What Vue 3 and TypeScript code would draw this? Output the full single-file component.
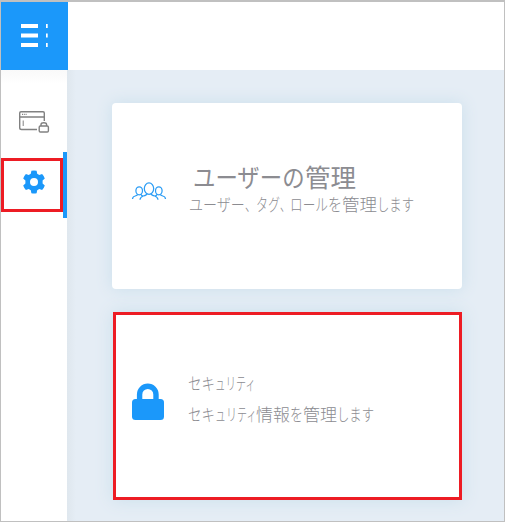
<script setup lang="ts">
interface Run {
  text: string
  width: number
}
interface Card {
  id: string
  titleSize: number
  title: Run[]
  description: Run[]
  selected: boolean
}

const BODY_SIZE = 17

const cards: Card[] = [
  {
    id: 'users',
    titleSize: 25,
    title: [
      { text: 'ユーザーの', width: 112 },
      { text: '管理', width: 51 },
    ],
    description: [
      { text: 'ユーザー', width: 56 },
      { text: '、', width: 11 },
      { text: 'タグ', width: 24 },
      { text: '、', width: 10 },
      { text: 'ロール', width: 38 },
      { text: 'を', width: 14 },
      { text: '管理', width: 35 },
      { text: 'します', width: 37 },
    ],
    selected: false,
  },
  {
    id: 'security',
    titleSize: BODY_SIZE,
    title: [
      { text: 'セキ', width: 27 },
      { text: 'ュリ', width: 21 },
      { text: 'ティ', width: 20 },
    ],
    description: [
      { text: 'セキ', width: 27 },
      { text: 'ュリ', width: 22 },
      { text: 'ティ', width: 20 },
      { text: '情報', width: 34 },
      { text: 'を', width: 13 },
      { text: '管理', width: 34 },
      { text: 'します', width: 37 },
    ],
    selected: true,
  },
]

// Condenses a run of full-width glyphs to its proportional advance.
function condense(run: Run, size: number) {
  const natural = run.text.length * size
  return {
    transform: `scaleX(${run.width / natural})`,
    marginRight: `${run.width - natural}px`,
  }
}
</script>

<template>
  <div class="page">
    <header class="topbar">
      <button class="menu" aria-label="メニュー">
        <svg width="67" height="68" viewBox="0 0 67 68">
          <path d="M20 22h17v4H20zM20 31.5h17v4H20zM20 41h17v4H20z" fill="#fff" />
          <path d="M45 22h1.7v4H45zM45 31.5h1.7v4H45zM45 41h1.7v4H45z" fill="#fff" />
        </svg>
      </button>
    </header>
    <div class="body">
      <nav class="sidebar">
        <a class="nav-item">
          <svg width="32" height="24" viewBox="0 0 32 24" fill="none" stroke="#818181" stroke-width="1.4">
            <path d="M19 19.5H3.5Q1.7 19.5 1.7 17.7V3Q1.7 1.7 3 1.7H25Q26.3 1.7 26.3 3V11M2 7H26" />
            <path d="M4 4.4H9" stroke-dasharray="1.2 1" />
            <path d="M5.2 10.5V16" stroke-width="1" />
            <rect x="21.2" y="16" width="9.2" height="6" rx="1.2" />
            <path d="M23 16V14.5Q23.2 12.7 25.8 12.7T28.6 14.5V16" />
          </svg>
        </a>
        <a class="nav-item active">
          <svg width="24" height="24" viewBox="0 0 24 24">
            <path
              fill="#1b98fa"
              fill-rule="evenodd"
              d="M9.4.8Q12 .2 14.6.8L15.2 3.7L17.3 4.9L20.1 4Q22 6 22.8 8.5L20.6 10.5V13.5L22.8 15.5Q22 18 20.1 20L17.3 19.1L15.2 20.3L14.6 23.2Q12 23.8 9.4 23.2L8.8 20.3L6.7 19.1L3.9 20Q2 18 1.2 15.5L3.4 13.5V10.5L1.2 8.5Q2 6 3.9 4L6.7 4.9L8.8 3.7ZM12 8a4 4 0 1 0 0 8a4 4 0 1 0 0-8Z"
            />
          </svg>
        </a>
      </nav>
      <main class="content">
        <section v-for="card in cards" :key="card.id" class="card" :class="[card.id, { selected: card.selected }]">
          <div class="icon">
            <svg v-if="card.id === 'users'" width="36" height="20" viewBox="0 0 36 20" fill="none" stroke="#2c9df5" stroke-width="1.25">
              <ellipse cx="18" cy="6.6" rx="4.7" ry="5.7" />
              <path d="M9 17.8Q9.3 15 12.2 14Q15.8 13.2 16 11.6M20 11.6Q20.2 13.2 23.8 14Q26.7 15 27 17.8" />
              <ellipse cx="8.2" cy="8.8" rx="3.3" ry="4" />
              <ellipse cx="27.8" cy="8.8" rx="3.3" ry="4" />
              <path d="M1.5 17Q1.7 14.6 4.2 14Q6.5 13.3 6.7 12.3M9.8 12.3Q10.2 13.4 12 14.2M34.5 17Q34.3 14.6 31.8 14Q29.5 13.3 29.3 12.3M26.2 12.3Q25.8 13.4 24 14.2" />
            </svg>
            <svg v-else width="34" height="38" viewBox="0 0 34 38">
              <path d="M8.6 19V11.5a8.2 8.2 0 0 1 16.4 0V19" fill="none" stroke="#1b98fa" stroke-width="5.4" />
              <rect x="1" y="16" width="32" height="21" rx="3.5" fill="#1b98fa" />
            </svg>
          </div>
          <div class="copy">
            <h2><span v-for="(run, i) in card.title" :key="i" class="run" :style="condense(run, card.titleSize)">{{ run.text }}</span></h2>
            <p><span v-for="(run, i) in card.description" :key="i" class="run" :style="condense(run, BODY_SIZE)">{{ run.text }}</span></p>
          </div>
        </section>
      </main>
    </div>
  </div>
</template>

<style>
body {
  margin: 0;
}
</style>

<style scoped>
.page {
  box-sizing: border-box;
  width: 505px;
  height: 522px;
  border: 1px solid #c0c0c0;
  border-top-width: 2px;
  background: #fff;
  display: flex;
  flex-direction: column;
  overflow: hidden;
  font-family: "Noto Sans CJK JP", sans-serif;
}
.topbar {
  height: 68px;
  flex: none;
  background: #fff;
}
.menu {
  width: 67px;
  height: 68px;
  padding: 0;
  border: 0;
  display: block;
  background: #1b98fa;
}
.menu svg,
.nav-item svg,
.icon svg {
  display: block;
}
.body {
  display: flex;
  flex: 1;
  min-height: 0;
}
.sidebar {
  box-sizing: border-box;
  width: 66px;
  flex: none;
  padding-top: 20px;
  background: linear-gradient(#f9f9f9, #fff 14px);
}
.nav-item {
  display: flex;
  box-sizing: border-box;
  height: 62px;
  padding: 20px 0 0 17px;
}
.nav-item.active {
  height: 66px;
  padding: 6px 0 6px;
  border-right: 4px solid #1b98fa;
}
.nav-item.active svg {
  box-sizing: border-box;
  width: 62px;
  height: 54px;
  padding: 9px 14px 15px 18px;
  border: 3px solid #ed1c24;
}
.content {
  flex: 1;
  display: flex;
  flex-direction: column;
  gap: 23px;
  padding: 33px 42px 0 45px;
  background: linear-gradient(90deg, #dfe7ee, #e5edf5 9px);
}
.card {
  box-sizing: border-box;
  width: 350px;
  height: 186px;
  flex: none;
  display: flex;
  border-radius: 4px;
  background: #fff;
  box-shadow: 0 0 16px 1px #cde1ed;
}
.card.selected {
  width: 349px;
  height: 188px;
  margin-left: 1px;
  border: 3px solid #ed1c24;
  border-radius: 0;
}
.icon {
  width: 77px;
  box-sizing: border-box;
  padding: 79px 0 0 19px;
}
.copy {
  white-space: nowrap;
  color: #8c8c91;
}
.run {
  display: inline-block;
  transform-origin: left center;
}
h2,
p {
  margin: 0;
  font-weight: 300;
  font-size: 17px;
  line-height: 24px;
}
.users h2 {
  margin: 58px 0 0 4px;
  font-size: 25px;
  line-height: 31px;
  font-weight: 400;
}
.selected .icon {
  width: 72px;
  padding: 68px 0 0 15px;
}
.selected h2 {
  margin-top: 56px;
}
.selected p {
  margin-top: 7px;
}
</style>
